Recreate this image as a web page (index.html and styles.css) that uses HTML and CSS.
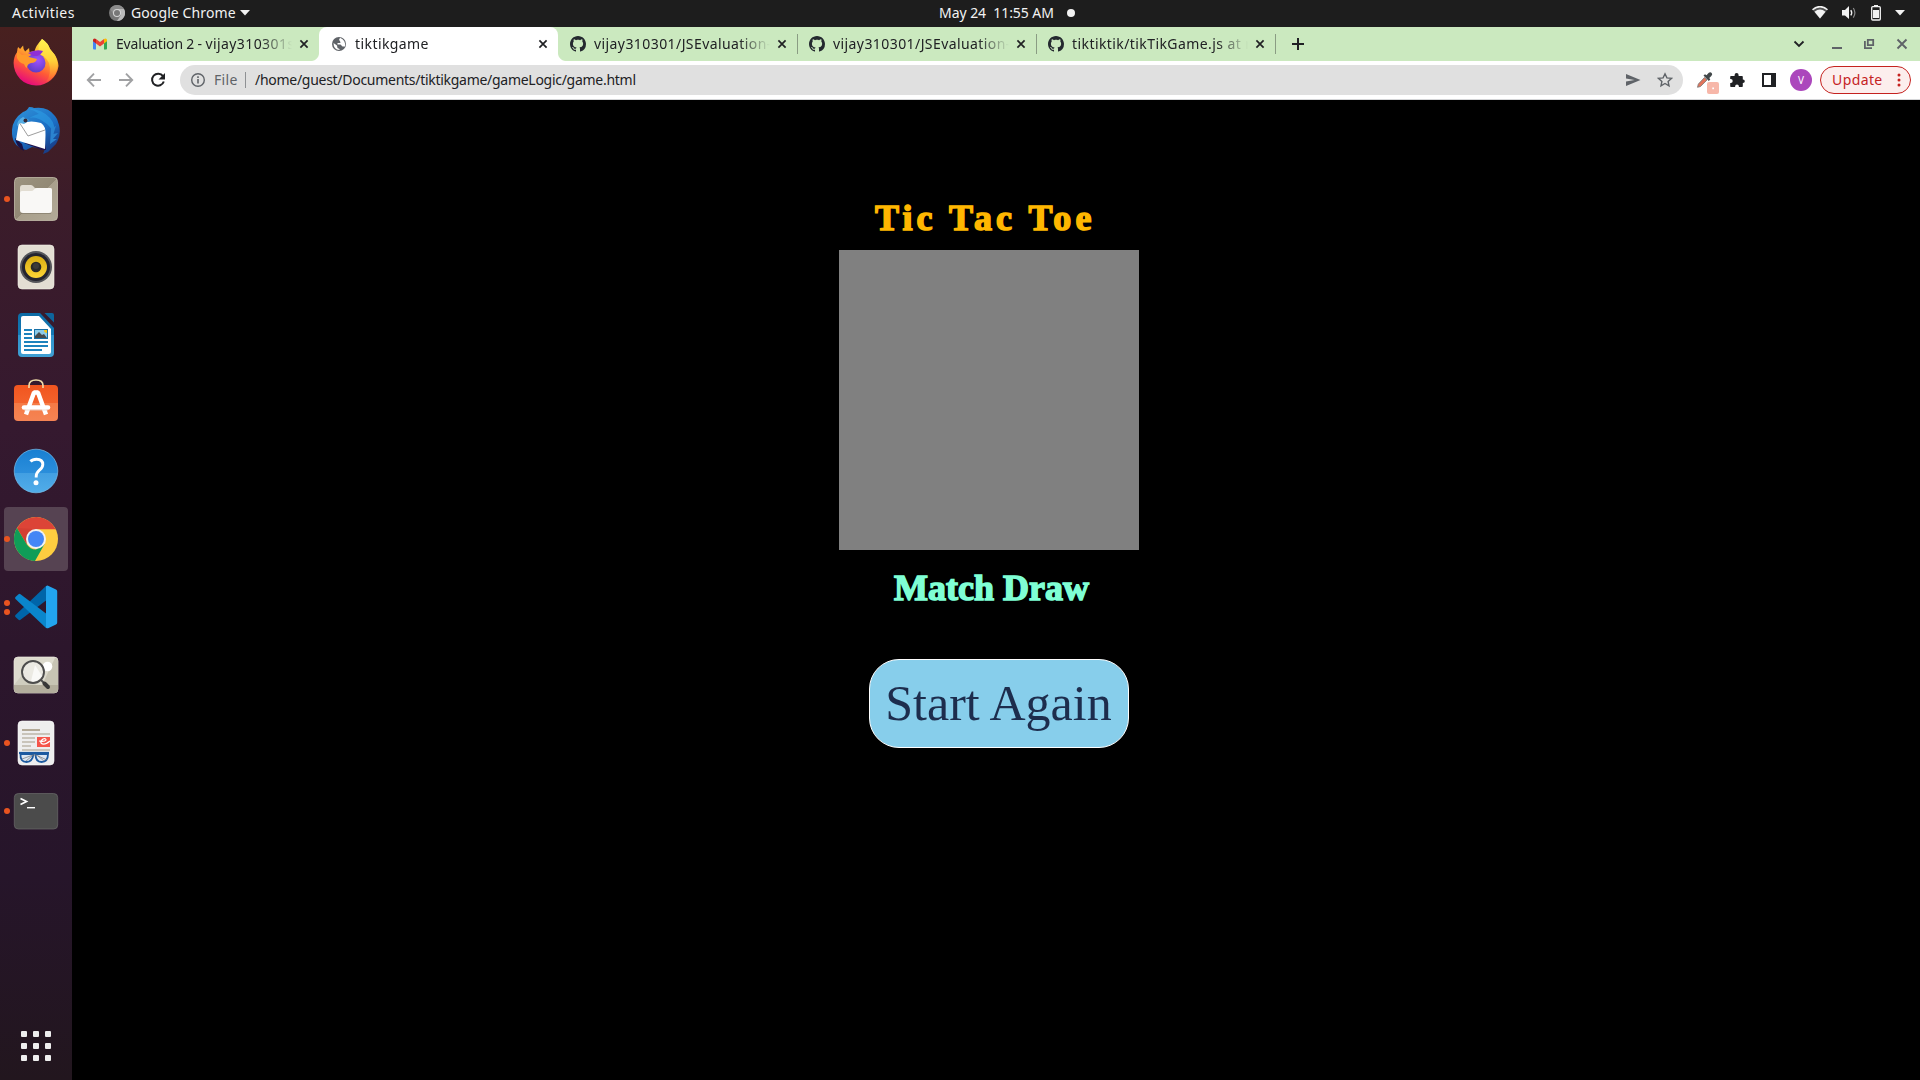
FILE: index.html
```html
<!DOCTYPE html>
<html lang="en">
<head>
<meta charset="utf-8">
<title>tiktikgame</title>
<link rel="stylesheet" href="styles.css">
</head>
<body>
<svg class="defs" width="0" height="0" aria-hidden="true">
  <symbol id="github" viewBox="0 0 16 16"><path fill="#24292f" d="M8 0C3.58 0 0 3.58 0 8c0 3.54 2.29 6.53 5.47 7.59.4.07.55-.17.55-.38 0-.19-.01-.82-.01-1.49-2.01.37-2.53-.49-2.69-.94-.09-.23-.48-.94-.82-1.13-.28-.15-.68-.52-.01-.53.63-.01 1.08.58 1.23.82.72 1.21 1.87.87 2.33.66.07-.52.28-.87.51-1.07-1.78-.2-3.64-.89-3.64-3.95 0-.87.31-1.59.82-2.15-.08-.2-.36-1.02.08-2.12 0 0 .67-.21 2.2.82.64-.18 1.32-.27 2-.27s1.36.09 2 .27c1.53-1.04 2.2-.82 2.2-.82.44 1.1.16 1.92.08 2.12.51.56.82 1.27.82 2.15 0 3.07-1.87 3.75-3.65 3.95.29.25.54.73.54 1.48 0 1.07-.01 1.93-.01 2.2 0 .21.15.46.55.38A8.01 8.01 0 0 0 16 8c0-4.42-3.58-8-8-8z"/></symbol>
  <symbol id="close" viewBox="0 0 10 10"><path d="M1.4 1.4l7.2 7.2M8.6 1.4L1.4 8.6" stroke="#202124" stroke-width="1.7" fill="none"/></symbol>
</svg>

<header class="topbar">
  <span class="activities">Activities</span>
  <div class="app-menu">
    <svg width="16" height="16" viewBox="0 0 16 16"><circle cx="8" cy="8" r="8" fill="#777"/><path d="M8 4h7a8 8 0 0 1-7 12l4-6z" fill="#b9b9b9"/><path d="M1.2 4a8 8 0 0 1 13.800 0H8L4.600 10z" fill="#8c8c8c"/><circle cx="8" cy="8" r="4" fill="#d6d6d6"/><circle cx="8" cy="8" r="3" fill="#777"/></svg>
    <span class="app-name">Google Chrome</span>
    <svg width="10" height="6" viewBox="0 0 10 6"><path d="M0 0h10L5 5.500z" fill="#f2f2f2"/></svg>
  </div>
  <div class="clock"><span class="clock-text">May 24&nbsp; 11:55 AM</span><i class="clock-dot"></i></div>
  <div class="tray">
    <svg width="16" height="14" viewBox="0 0 16 14"><path d="M.5 3.800Q8-2.600 15.500 3.800L8 12.800z" fill="#555"/><path d="M.5 3.800Q8-2.600 15.500 3.800" fill="none" stroke="#f2f2f2" stroke-width="1.500"/><path d="M2.500 5.700Q8 1.400 13.500 5.700L8 12.500z" fill="#f2f2f2"/></svg>
    <svg width="15" height="14" viewBox="0 0 15 14"><path d="M0 4h3l4-4v13L3 9.500H0z" fill="#f2f2f2"/><path d="M8.800 4.200q1.800 2.600 0 5.200" stroke="#f2f2f2" stroke-width="1.400" fill="none"/><path d="M11.300 2q3.200 4.800 0 9.600" stroke="#8a8a8a" stroke-width="1.200" fill="none"/></svg>
    <svg width="10" height="16" viewBox="0 0 10 16"><path d="M3 0h4v2H3z" fill="#f2f2f2"/><rect x=".7" y="1.700" width="8.600" height="13.300" rx="1" fill="none" stroke="#f2f2f2" stroke-width="1.300"/><path d="M2 5h6v8H2z" fill="#f2f2f2"/></svg>
    <svg width="10" height="6" viewBox="0 0 10 6"><path d="M0 0h10L5 5.500z" fill="#f2f2f2"/></svg>
  </div>
</header>

<div class="desktop">
<nav class="dock">
  <div class="launcher"><svg width="48" height="48" viewBox="0 0 48 48">
    <defs>
      <linearGradient id="fxBody" x1=".8" y1=".05" x2=".35" y2="1"><stop offset="0" stop-color="#fff44f"/><stop offset=".35" stop-color="#ffb02e"/><stop offset=".65" stop-color="#ff5a36"/><stop offset="1" stop-color="#e5077f"/></linearGradient>
      <linearGradient id="fxTail" x1=".5" y1="0" x2=".5" y2="1"><stop offset="0" stop-color="#fff44f"/><stop offset=".5" stop-color="#ffd23a"/><stop offset="1" stop-color="#ff8a2a" stop-opacity=".2"/></linearGradient>
      <radialGradient id="fxGlobe" cx=".6" cy=".35" r=".7"><stop offset="0" stop-color="#a051ff"/><stop offset="1" stop-color="#5b3cc4"/></radialGradient>
    </defs>
    <path d="M30 0q6 4 8 10l4 5q4 5 4.500 12A22.400 22.400 0 0 1 24 46.500 22.400 22.400 0 0 1 1.600 24q0-6 3.500-11 0-3 1-5l2 2 3-3.500q0 4 2 6l4-3.500q0 2 .5 4l5-1q1-5 7.400-12z" fill="url(#fxBody)"/>
    <path d="M30 0q6 4 8 10l5 6q5 10 0 19-3 6-9 8 6-8 3-19-3-6-9-9-4-6 2-15z" fill="url(#fxTail)"/>
    <circle cx="24" cy="24" r="9.500" fill="url(#fxGlobe)"/>
    <path d="M16 14q8-4 15-2-2 4-6 5-2 0-4 0z" fill="#8f2fd6"/>
    <path d="M5 12l5 4q5-1 7 2l8 2q-1 4-6 4-4 1-4 5-2-1-3-4-5-1-7-6z" fill="#ff9a2b"/>
  </svg></div>
  <div class="launcher"><svg width="48" height="48" viewBox="0 0 48 48">
    <defs><linearGradient id="tb" x1=".2" y1="0" x2=".8" y2="1"><stop offset="0" stop-color="#2d8fd8"/><stop offset=".55" stop-color="#1b6cc2"/><stop offset="1" stop-color="#18377f"/></linearGradient></defs>
    <path d="M17 0q4 0 5 1 14-2 21 8l2 3 2 6q2 8-1 15l-2 4-4 4-4 4-5 2 2-5-13-2-6 3Q1 40 0 27-1 13 11 5q4-1 6-5z" fill="url(#tb)"/>
    <path d="M17 2q13 0 21 9 7 8 3 18-1-10-9-14-8-6-15-4 8-4 10-4-5-4-10-5z" fill="#2ea0e8" opacity=".55"/>
    <path d="M3 31q1 9 9 13l-2-7z" fill="#1a1246"/>
    <path d="M12 36l18 7 4 0-1-6z" fill="#21134d"/>
    <path d="M7 15q2-1 4 1 8-3 18 0 5 3 4.500 12L33 42 4 33z" fill="#fff"/>
    <path d="M7 15l9 14 17-6" fill="none" stroke="#9e9e9e" stroke-width="1"/>
    <path d="M5 19q0-6 6-9l6 3q-3 3-5 4l-4-1z" fill="#55aee5"/>
    <circle cx="13.500" cy="13.500" r="2" fill="#342a3a"/>
    <path d="M39 22l5-3-3 8 5-1-5 6 4 0-7 5z" fill="#2b83cf"/>
  </svg></div>
  <div class="launcher"><i class="run"></i><svg width="48" height="48" viewBox="0 0 48 48">
    <defs><linearGradient id="fl" x1="0" y1="0" x2="1" y2="1"><stop offset="0" stop-color="#9c937f"/><stop offset=".5" stop-color="#928975"/><stop offset=".5" stop-color="#a9a08c"/><stop offset="1" stop-color="#b2aa98"/></linearGradient></defs>
    <rect x="2.500" y="2.500" width="43" height="43" rx="4" fill="url(#fl)" stroke="#c3bda9" stroke-width=".8"/>
    <path d="M8 13q0-3 2.500-3H19q1.500 0 2.500 1.500L23 13h15q2 0 2 2v8H8z" fill="#e2ddd2"/>
    <path d="M8 18q0-2 2-2h9q2 0 3-1.500T25 13h13q2 0 2 2v20q0 3-3 3H11q-3 0-3-3z" fill="#f9f8f6"/>
    <path d="M9 38.500h30" stroke="#7d7564" opacity=".6"/>
  </svg></div>
  <div class="launcher"><svg width="48" height="48" viewBox="0 0 48 48">
    <defs><linearGradient id="rb" x1="0" y1="0" x2="0" y2="1"><stop offset="0" stop-color="#d9ad12"/><stop offset="1" stop-color="#fcd436"/></linearGradient></defs>
    <rect x="6" y="2" width="36" height="44" rx="4" fill="#e3ded3" stroke="#f4f1ea" stroke-width=".6"/>
    <circle cx="24" cy="24" r="16" fill="#55565a"/><circle cx="24" cy="24" r="14" fill="#24242f"/><circle cx="24" cy="24" r="11" fill="url(#rb)"/><circle cx="24" cy="24" r="5.300" fill="#2b2a28"/><circle cx="24" cy="23" r="3" fill="#3c3b39"/>
  </svg></div>
  <div class="launcher"><svg width="48" height="48" viewBox="0 0 48 48">
    <defs><linearGradient id="wr" x1="0" y1="0" x2="0" y2="1"><stop offset="0" stop-color="#0c6ba5"/><stop offset=".5" stop-color="#1479b5"/><stop offset=".5" stop-color="#2e93cc"/><stop offset="1" stop-color="#3f9fd3"/></linearGradient></defs>
    <path d="M10 2h18l14 15v25q0 4-4 4H10q-4 0-4-4V6q0-4 4-4z" fill="url(#wr)"/>
    <path d="M11 5h16l12 13v23q0 2-2 2H11q-2 0-2-2V7q0-2 2-2z" fill="#fff"/>
    <path d="M32.500 2H40q2 0 2 2v7.500z" fill="#0e659c"/>
    <path d="M12 18h8v2h-8zM12 22h8v2h-8zM12 26h8v2h-8zM12 30h24v2H12zM12 34h24v2H12zM12 38h18v2H12z" fill="#1d82bd"/>
    <path d="M22 18h14v10H22z" fill="#176fa6"/><path d="M23 19h12v8H23z" fill="#8ccbea"/><path d="M32 19h3v3q-3 0-3-3z" fill="#f5c518"/><path d="M23 27v-2l4-4 3 3 2-1 3 4z" fill="#454a4d"/>
  </svg></div>
  <div class="launcher"><svg width="48" height="48" viewBox="0 0 48 48">
    <defs><linearGradient id="sw" x1="0" y1="0" x2="0" y2="1"><stop offset="0" stop-color="#f1551f"/><stop offset=".5" stop-color="#f3622c"/><stop offset=".5" stop-color="#f57a45"/><stop offset="1" stop-color="#f58454"/></linearGradient></defs>
    <rect x="2" y="6" width="44" height="36" rx="4" fill="url(#sw)"/>
    <path d="M17 9V6.500q0-5.500 7-5.500t7 5.500V9" fill="none" stroke="#f0dca9" stroke-width="1.600"/>
    <path d="M14 35.500l8-22h4l8 22" fill="none" stroke="#fff" stroke-width="4.400" stroke-linejoin="bevel"/>
    <path d="M12 28.500h24" stroke="#fff" stroke-width="4.600" stroke-linecap="round"/><path d="M12 31h24" stroke="#e8d5cc" stroke-width=".8"/>
  </svg></div>
  <div class="launcher"><svg width="48" height="48" viewBox="0 0 48 48">
    <defs><linearGradient id="hp" x1="0" y1="0" x2="0" y2="1"><stop offset="0" stop-color="#187fd2"/><stop offset=".54" stop-color="#2b8edb"/><stop offset=".54" stop-color="#429fe2"/><stop offset="1" stop-color="#51ade9"/></linearGradient></defs>
    <circle cx="24" cy="24" r="21.800" fill="url(#hp)" stroke="#77bfed" stroke-width=".7"/>
    <path d="M18.500 14.500q2-2.300 6-2.300 6.300 0 6.300 5.300 0 3-3.400 5.700-3.200 2.700-3.200 6.300v1" fill="none" stroke="#fff" stroke-width="2.900"/><circle cx="24" cy="35.700" r="2.500" fill="#fff"/>
  </svg></div>
  <div class="launcher active"><i class="run"></i><svg width="48" height="48" viewBox="0 0 48 48">
    <circle cx="24" cy="24" r="22" fill="#fecd40"/>
    <path d="M5 12.900A22 22 0 0 1 43.800 14.200H24L14.500 29z" fill="#dc4437"/>
    <path d="M5 12.900A22 22 0 0 0 23 46l9.600-17L24 34.500q-6 0-9.500-5.500z" fill="#109d58"/>
    <path d="M5.300 12.900l9.200 16V24q0-8 9.500-9.800z" fill="#b93128" opacity=".25"/>
    <circle cx="24" cy="24" r="10" fill="#f1f1f1"/><circle cx="24" cy="24" r="8" fill="#4386f5"/>
  </svg></div>
  <div class="launcher"><span class="runs"><i></i><i></i></span><svg width="48" height="48" viewBox="0 0 48 48">
    <path d="M34 3L3.500 32q-1 1 0 2l3 2.700q1 .8 2 .1L36 16z" fill="#0065a9"/>
    <path d="M34 45L3.500 16q-1-1 0-2l3-2.700q1-.8 2-.1L36 32z" fill="#0a86cc"/>
    <path d="M34 3.200q1.200-1 2.600-.3l7.400 3.500q1.200.6 1.200 2V39.500q0 1.400-1.200 2l-7.400 3.600q-1.400.6-2.600-.4z" fill="#22a4ee"/>
  </svg></div>
  <div class="launcher"><svg width="48" height="48" viewBox="0 0 48 48">
    <rect x="2" y="6" width="44" height="36" rx="4" fill="#dddbce" stroke="#edeae0" stroke-width=".7"/>
    <path d="M30 34L43 7q3 0 3 3v24z" fill="#c7c4b4"/><path d="M2 34h44v4q0 4-4 4H6q-4 0-4-4z" fill="#b3ae9d"/>
    <path d="M2 34l12-15 10 15z" fill="#cfcdbf"/>
    <circle cx="35.500" cy="15.500" r="4.800" fill="#fff"/>
    <circle cx="21" cy="21" r="11" fill="#ecebe6" fill-opacity=".9" stroke="#4d4d4d" stroke-width="1.900"/>
    <path d="M19 30l4-16 7 11q-5 7-11 5z" fill="#fff" opacity=".7"/>
    <path d="M29 29l3.500 3.500" stroke="#4d4d4d" stroke-width="2"/><path d="M32.500 32.500l3.500 3.500" stroke="#383838" stroke-width="4" stroke-linecap="round"/>
  </svg></div>
  <div class="launcher"><i class="run"></i><svg width="48" height="48" viewBox="0 0 48 48">
    <rect x="6" y="2" width="36" height="44" rx="4" fill="#eeeeee" stroke="#fafafa" stroke-width=".6"/>
    <path d="M10 10h18v2H10z" fill="#b3aa98"/><path d="M10 14h28v2H10zM10 18h13v2H10zM10 22h13v2H10zM10 26h9v2h-9zM10 30h28v2H10z" fill="#c9c4ba"/>
    <rect x="25" y="18" width="13" height="10" fill="#f5554a"/><path d="M27 22q6 1 7-1 0-2-3-1-3 2-2 4 3 3 9-2" fill="none" stroke="#fff" stroke-width="1.200"/>
    <path d="M7 34h30" stroke="#1c5aa0" stroke-width="2.200"/><path d="M8.500 35q-.5 8 6 8 6 0 7-8zM23.500 35q0 8 6 8 6.500 0 6.500-8z" fill="#dce7f3" stroke="#1c5aa0" stroke-width="1.800"/><path d="M10 40l11-4 3 0 11 5M20 37l-6 5M26 37l6 5" fill="none" stroke="#777" stroke-width=".7"/>
  </svg></div>
  <div class="launcher"><i class="run"></i><svg width="48" height="48" viewBox="0 0 48 48">
    <rect x="2.300" y="6.500" width="43.400" height="35.500" rx="4" fill="#4b4b4b" stroke="#6a6a6a" stroke-width=".7"/>
    <path d="M8.500 11.500l6 3-6 3" fill="none" stroke="#fff" stroke-width="1.700"/><path d="M15 20.700h8" stroke="#fff" stroke-width="1.400"/>
  </svg></div>
  <div class="apps-grid"><i></i><i></i><i></i><i></i><i></i><i></i><i></i><i></i><i></i></div>
</nav>

<main class="browser">
  <div class="tabstrip">
    <div class="tab"><svg width="16" height="16" viewBox="0 0 16 16"><path d="M1 4v8.500q0 1 1 1h2V6z" fill="#4285f4"/><path d="M15 4v8.500q0 1-1 1h-2V6z" fill="#34a853"/><path d="M1 4.500V4q0-1.500 1.500-1.500 .7 0 1.500.6v4.400L1 5.200z" fill="#c5221f"/><path d="M4 3.100l4 3 4-3v4.400l-4 3-4-3z" fill="#ea4335"/><path d="M12 3.100q.8-.6 1.500-.6Q15 2.500 15 4v1.200l-3 2.300z" fill="#fbbc04"/></svg><span class="title"><span class="tight">Evaluation 2 - </span>vijay310301s</span><svg class="x" width="10" height="10"><use href="#close"/></svg></div>
    <div class="tab current"><svg width="16" height="16" viewBox="0 0 16 16"><circle cx="8" cy="8" r="7" fill="#5f6368"/><path d="M2.500 7l3.500 2.500.500 2.500 2 1v1q-6-.3-6-7zM9 1.800l-1 2.200 1 1 .500 2H6.500l0 1.500 3 0 2 2h2.500q1-6-5-8.700z" fill="#fff"/></svg><span class="title">tiktikgame</span><svg class="x" width="10" height="10"><use href="#close"/></svg></div>
    <div class="tab"><svg width="16" height="16"><use href="#github"/></svg><span class="title">vijay310301/JSEvaluation-</span><svg class="x" width="10" height="10"><use href="#close"/></svg></div>
    <div class="tab ruled"><svg width="16" height="16"><use href="#github"/></svg><span class="title">vijay310301/JSEvaluation-</span><svg class="x" width="10" height="10"><use href="#close"/></svg></div>
    <div class="tab ruled"><svg width="16" height="16"><use href="#github"/></svg><span class="title">tiktiktik/tikTikGame.js at m</span><svg class="x" width="10" height="10"><use href="#close"/></svg></div>
    <div class="new-tab"><svg width="12" height="12" viewBox="0 0 12 12"><path d="M6 0v12M0 6h12" stroke="#202124" stroke-width="2"/></svg></div>
    <div class="window-buttons">
      <svg width="12" height="12" viewBox="0 0 12 12"><path d="M1.500 3.500L6 8l4.500-4.500" fill="none" stroke="#202124" stroke-width="1.800"/></svg>
      <svg width="12" height="12" viewBox="0 0 12 12"><path d="M1 9h10v2H1z" fill="#5f6368"/></svg>
      <svg width="12" height="12" viewBox="0 0 12 12"><path d="M4.800 1.800h5.400v5.400H4.800zM1.900 3v7.100H9" fill="none" stroke="#5f6368" stroke-width="1.800"/></svg>
      <svg width="12" height="12" viewBox="0 0 12 12"><path d="M1.500 1.500l9 9M10.500 1.500l-9 9" stroke="#5f6368" stroke-width="1.900"/></svg>
    </div>
  </div>

  <div class="toolbar">
    <div class="nav-buttons">
      <svg width="16" height="16" viewBox="0 0 16 16"><path d="M15 8H2.500M8 1.700L1.800 8 8 14.300" fill="none" stroke="#a0a1a3" stroke-width="1.900"/></svg>
      <svg width="16" height="16" viewBox="0 0 16 16"><path d="M1 8h12.500M8 1.700L14.200 8 8 14.300" fill="none" stroke="#a0a1a3" stroke-width="1.900"/></svg>
      <svg width="16" height="16" viewBox="0 0 16 16"><path d="M13 4.200A6 6 0 1 0 13.800 9.500" fill="none" stroke="#202124" stroke-width="2"/><path d="M15 1v6.500H8.500z" fill="#202124"/></svg>
    </div>
    <div class="omnibox">
      <svg width="16" height="16" viewBox="0 0 16 16"><circle cx="8" cy="8" r="6.300" fill="none" stroke="#5f6368" stroke-width="1.400"/><path d="M8 7v4.500M8 4.300v1.600" stroke="#5f6368" stroke-width="1.600"/></svg>
      <span class="scheme">File</span><i class="rule"></i><span class="url">/home/guest/Documents/tiktikgame/gameLogic/game.html</span>
      <svg class="send" width="16" height="16" viewBox="0 0 16 16"><path d="M1 2l14.500 6L1 14V9.500L9.500 8 1 6.500z" fill="#5f6368"/></svg>
      <svg width="16" height="16" viewBox="0 0 16 16"><path d="M8 1.800l1.900 4.100 4.500.5-3.300 3 .9 4.400L8 11.500l-4 2.300.900-4.400-3.300-3 4.500-.5z" fill="none" stroke="#5f6368" stroke-width="1.400"/></svg>
    </div>
    <div class="extensions">
      <svg width="24" height="24" viewBox="0 0 24 24"><path d="M9.500 9.500l2.500 2.500-6.500 6.500-3 .8.800-3.200z" fill="#e2745b" stroke="#777" stroke-width=".8"/><path d="M8.500 7.500l1.500-1.200 1.500 1 2-2.300q1.800-1.500 3.200 0 1.200 1.500-.4 3L14.300 10l1 1.500-1.500 1.500z" fill="#414749"/><rect x="12" y="14" width="12" height="12" rx="2" fill="#f7b7a9"/><rect x="17.300" y="19.500" width="1.700" height="1.700" fill="#fff"/></svg>
      <svg width="16" height="16" viewBox="0 0 16 16"><path d="M2 4h3.600V3a2 2 0 0 1 4 0v1H13q.800 0 .8.800V7.500h.2a1.800 1.800 0 0 1 0 3.600h-.200v3.100q0 .8-.8.8H9.900v-.6a1.900 1.900 0 0 0-3.800 0v.6H2q-.8 0-.8-.8v-3.300h.6a1.900 1.900 0 0 0 0-3.800h-.6V4.800Q1.200 4 2 4z" fill="#202124"/></svg>
      <svg width="14" height="14" viewBox="0 0 14 14"><path d="M0 0h14v14H0zM2 2v10h7V2z" fill="#202124" fill-rule="evenodd"/></svg>
      <span class="avatar">V</span>
    </div>
    <div class="update"><span class="update-text">Update</span><svg width="4" height="14" viewBox="0 0 4 14"><circle cx="2" cy="2" r="1.500" fill="#c5221f"/><circle cx="2" cy="7" r="1.500" fill="#c5221f"/><circle cx="2" cy="12" r="1.500" fill="#c5221f"/></svg></div>
  </div>

  <section class="page">
    <h1 class="heading">Tic Tac Toe</h1>
    <div class="board"></div>
    <h2 class="result">Match Draw</h2>
    <button class="restart">Start Again</button>
  </section>
</main>
</div>
</body>
</html>
```
FILE: styles.css
```css
* { box-sizing: border-box; }

body {
  margin: 0;
  width: 1920px;
  height: 1080px;
  overflow: hidden;
  display: flex;
  flex-direction: column;
  background: #000;
  font: 14px/20px "Noto Sans", "Open Sans", sans-serif;
}

svg { display: block; flex: none; }
.defs { position: absolute; }
span { white-space: nowrap; }

/* system bar */
.topbar {
  flex: none;
  height: 27px;
  display: grid;
  grid-template-columns: 109px 830px 1fr auto;
  align-items: center;
  padding: 0 15px 1px 0;
  background: #1d1d1d;
  color: #f2f2f2;
}
.activities { padding-left: 12px; letter-spacing: .45px; }
.app-menu { display: flex; align-items: center; }
.app-name { width: 115px; padding-left: 6px; letter-spacing: .1px; }
.clock { display: flex; align-items: center; }
.clock-text { width: 128px; letter-spacing: -.05px; }
.clock-dot { width: 8px; height: 8px; border-radius: 50%; background: #f2f2f2; }
.tray { display: flex; align-items: center; gap: 14px; }

/* launcher column */
.desktop { flex: 1; display: flex; min-height: 0; }
.dock {
  flex: none;
  width: 72px;
  display: flex;
  flex-direction: column;
  align-items: center;
  gap: 4px;
  padding: 4px 0 19px;
  background: linear-gradient(#48201f 0, #3b1c2a 180px, #35192f 400px, #2c162c 620px, #26152a 850px, #22161e 1053px);
}
.launcher {
  position: relative;
  width: 64px;
  height: 64px;
  flex: none;
  display: grid;
  place-items: center;
  border-radius: 4px;
}
.launcher.active { background: #564352; }
.run, .runs i { width: 6px; height: 6px; border-radius: 50%; background: #e95420; }
.run { position: absolute; left: 0; top: 29px; }
.runs { position: absolute; left: 0; top: 25px; display: grid; gap: 3px; }
.apps-grid {
  margin-top: auto;
  display: grid;
  grid-template-columns: repeat(3, 6px);
  gap: 6px;
}
.apps-grid i { height: 6px; border-radius: 1px; background: #eee; }

/* browser tabs */
.browser { flex: 1; display: flex; flex-direction: column; min-width: 0; }
.tabstrip {
  flex: none;
  height: 34px;
  display: flex;
  padding: 0 12px 0 8px;
  background: #cbe9bf;
  color: #202124;
}
.tab {
  position: relative;
  flex: none;
  width: 239px;
  display: flex;
  align-items: center;
  padding-left: 12px;
}
.title {
  width: 176px;
  margin-left: 8px;
  overflow: hidden;
  letter-spacing: .42px;
  -webkit-mask-image: linear-gradient(90deg, #000 145px, transparent 176px);
  mask-image: linear-gradient(90deg, #000 145px, transparent 176px);
}
.tight { letter-spacing: -.18px; }
.x { margin-left: 7px; }
.current { background: #fff; border-radius: 8px 8px 0 0; }
.current::before, .current::after {
  content: "";
  position: absolute;
  bottom: 0;
  width: 8px;
  height: 8px;
}
.current::before { left: -8px; background: radial-gradient(circle at 0 0, transparent 7.5px, #fff 8.5px); }
.current::after { right: -8px; background: radial-gradient(circle at 100% 0, transparent 7.5px, #fff 8.5px); }
.ruled::before, .new-tab::before { content: ""; width: 1px; height: 20px; background: #8a9c83; }
.ruled::before { margin: 0 11px 0 -12px; }
.new-tab { display: flex; align-items: center; gap: 16px; }
.window-buttons { margin-left: auto; display: flex; align-items: center; gap: 21px; }
.window-buttons svg:first-child { margin-right: 5px; }
.window-buttons svg:nth-child(2) { margin-right: -1px; }

/* address bar */
.toolbar {
  flex: none;
  height: 39px;
  display: flex;
  align-items: center;
  padding: 0 9px 1px 14px;
  background: #fff;
  border-bottom: 1px solid #d5d6d8;
}
.nav-buttons { display: flex; gap: 16px; width: 94px; }
.omnibox {
  width: 1503px;
  height: 30px;
  display: flex;
  align-items: center;
  padding: 0 10px;
  border-radius: 15px;
  background: #e0e0e0;
}
.scheme { margin-left: 8px; width: 31px; color: #5f6368; letter-spacing: .3px; }
.rule { width: 1px; height: 16px; background: #8f9194; margin-right: 9px; }
.url { color: #202124; letter-spacing: -.28px; }
.send { margin: 0 16px 0 auto; }
.extensions { display: flex; align-items: center; gap: 16px; margin-left: 12px; }
.extensions svg:first-child { margin-right: -6px; overflow: visible; }
.extensions svg:nth-child(3) { margin: 0 -2px 0 1px; }
.avatar {
  width: 22px;
  height: 22px;
  border-radius: 50%;
  background: #ab47bc;
  color: #fff;
  font-size: 10px;
  line-height: 22px;
  text-align: center;
}
.update {
  width: 91px;
  height: 28px;
  margin-left: auto;
  display: flex;
  align-items: center;
  justify-content: space-between;
  padding: 0 9px 0 11px;
  border: 1px solid #c5221f;
  border-radius: 14px;
  background: #fceeed;
  color: #c5221f;
}
.update-text { letter-spacing: .4px; }

/* game page */
.page {
  flex: 1;
  display: flex;
  flex-direction: column;
  align-items: flex-start;
  padding: 98px 0 0 767px;
  background: #000;
  font-family: "Liberation Serif", serif;
}
.heading, .result { margin: 0; font-size: 36px; line-height: 40px; white-space: nowrap; -webkit-text-stroke: 1.5px; }
.heading { margin-left: 36px; height: 52px; color: #ffb700; letter-spacing: 4.1px; }
.board { width: 300px; height: 300px; background: #808080; }
.result { margin: 18px 0 0 55px; color: #7fffd4; }
.restart {
  width: 260px;
  height: 89px;
  margin: 51px 0 0 30px;
  padding: 0 1px 2px 0;
  border: 1px solid #fff;
  border-radius: 30px;
  background: #87ceeb;
  color: #1d2d4d;
  font: 50px "Liberation Serif", serif;
}
```
